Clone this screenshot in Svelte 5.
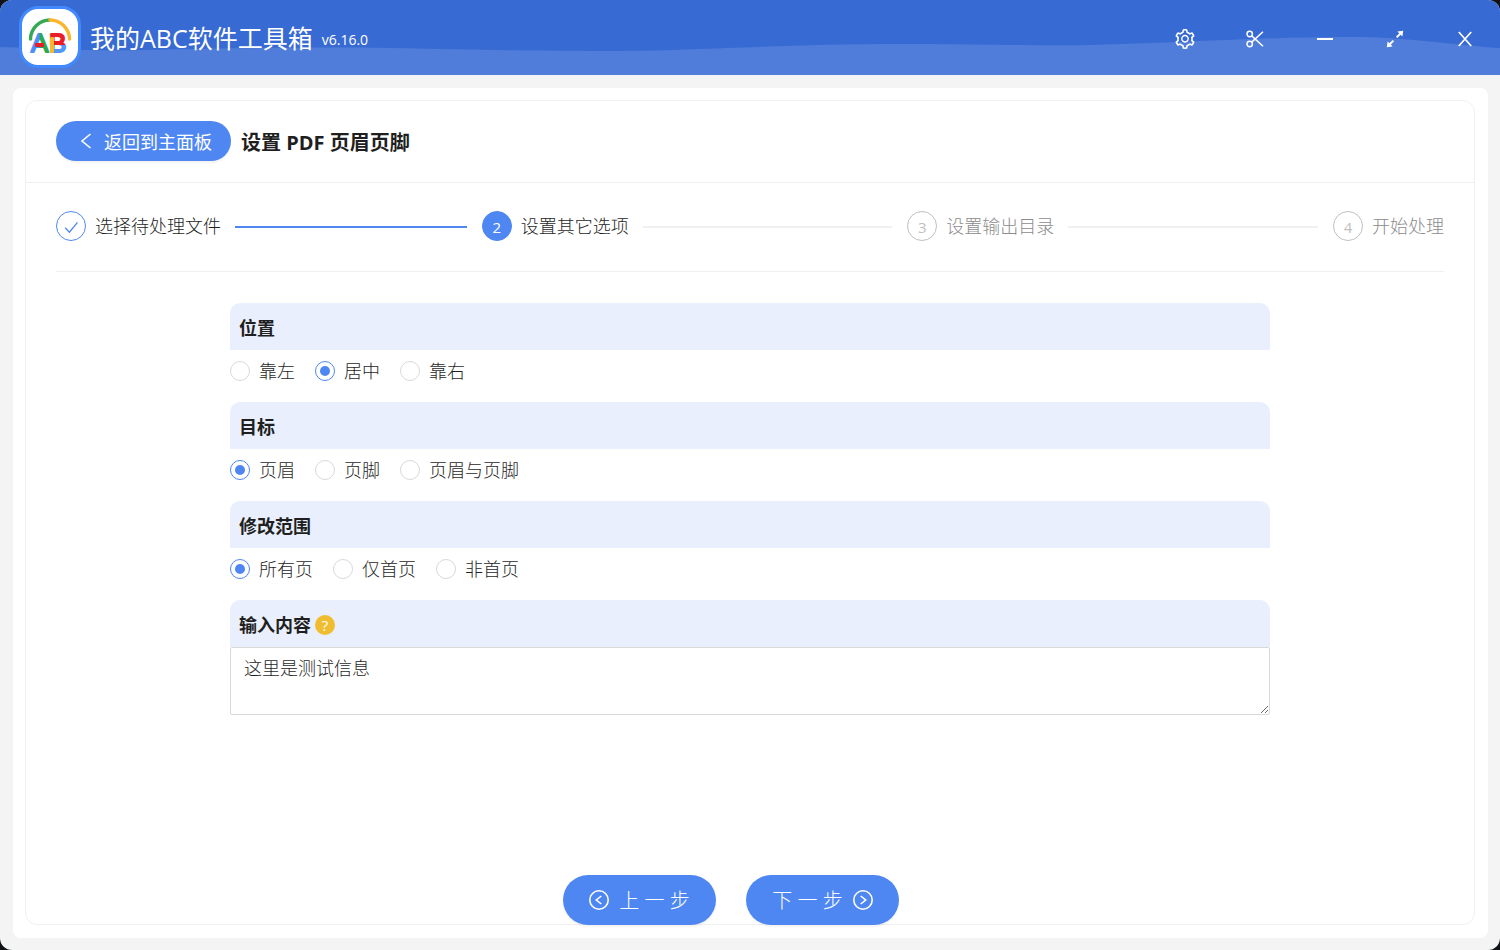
<script lang="ts">
  // PDF header/footer wizard, step 2: other options

  interface OptionGroup {
    name: string;
    title: string;
    options: string[];
    selected: string;
  }

  const steps = ['选择待处理文件', '设置其它选项', '设置输出目录', '开始处理'];
  const current = 1;

  let groups: OptionGroup[] = $state([
    { name: 'align', title: '位置', options: ['靠左', '居中', '靠右'], selected: '居中' },
    { name: 'target', title: '目标', options: ['页眉', '页脚', '页眉与页脚'], selected: '页眉' },
    { name: 'range', title: '修改范围', options: ['所有页', '仅首页', '非首页'], selected: '所有页' }
  ]);

  let content = $state('这里是测试信息');
</script>

<div class="window">
  <header class="titlebar">
    <!-- Wave behind the title bar -->
    <svg class="wave" viewBox="0 0 1500 75" preserveAspectRatio="none" aria-hidden="true">
      <path d="M0 47C50 49 90 51 150 50C240 48 310 47 390 48C480 50 550 51 620 51C710 50 790 44 900 44C980 44 1020 46 1090 45C1180 43 1260 37 1350 37C1410 37 1450 45 1500 48V75H0Z" />
    </svg>

    <div class="brand">
      <svg class="logo" viewBox="0 0 56 56" aria-hidden="true">
        <defs>
          <linearGradient id="logo-a">
            <stop offset="0.45" stop-color="#4c8ff8" />
            <stop offset="0.5" stop-color="#2fa84f" />
          </linearGradient>
          <linearGradient id="logo-b" x2="0" y2="1">
            <stop offset="0.56" stop-color="#ea1c24" />
            <stop offset="0.56" stop-color="#5596fb" />
          </linearGradient>
        </defs>
        <path d="M8.500 30A19.500 19.500 0 0 1 28 11" fill="none" stroke="#34a853" stroke-width="3.400" stroke-linecap="round" />
        <path d="M28 11A19.500 19.500 0 0 1 47.500 30" fill="none" stroke="#fbb62c" stroke-width="3.400" stroke-linecap="round" />
        <text x="9" y="43" fill="url(#logo-a)" stroke="url(#logo-a)">A</text>
        <text x="27" y="43" fill="url(#logo-b)" stroke="url(#logo-b)">B</text>
        <rect x="13" y="34" width="9" height="4" rx="1" fill="#ea1c24" />
        <rect x="28" y="28" width="4" height="16" rx="1" fill="#fbb62c" />
      </svg>
      <h1>我的ABC软件工具箱</h1>
      <span class="version">v6.16.0</span>
    </div>

    <div class="window-actions">
      <button type="button" aria-label="设置">
        <svg viewBox="64 64 896 896" fill="currentColor"><path d="M924.8 625.7l-65.500-56c3.100-19 4.700-38.400 4.700-57.800s-1.600-38.800-4.700-57.800l65.500-56a32.030 32.030 0 009.300-35.200l-.9-2.600a443.740 443.740 0 00-79.700-137.900l-1.800-2.100a32.120 32.120 0 00-35.100-9.500l-81.300 28.900c-30-24.600-63.500-44-99.700-57.600l-15.700-85a32.050 32.050 0 00-25.800-25.700l-2.700-.5c-52.100-9.400-106.900-9.400-159 0l-2.700.5a32.050 32.050 0 00-25.800 25.700l-15.800 85.400a351.860 351.860 0 00-99 57.400l-81.900-29.100a32 32 0 00-35.100 9.500l-1.800 2.100a446.020 446.020 0 00-79.700 137.900l-.9 2.600c-4.500 12.500-.8 26.500 9.300 35.200l66.300 56.600c-3.100 18.800-4.600 38-4.600 57.100 0 19.200 1.500 38.400 4.600 57.100L99 625.500a32.030 32.030 0 00-9.300 35.200l.9 2.600c18.100 50.400 44.900 96.900 79.700 137.900l1.800 2.100a32.120 32.120 0 0035.100 9.500l81.900-29.100c29.800 24.500 63.100 43.900 99 57.400l15.800 85.400a32.050 32.050 0 0025.800 25.700l2.700.5a449.400 449.400 0 00159 0l2.700-.5a32.050 32.050 0 0025.800-25.700l15.700-85a350 350 0 0099.700-57.600l81.300 28.900a32 32 0 0035.100-9.500l1.800-2.100c34.800-41.100 61.600-87.500 79.700-137.900l.9-2.600c4.500-12.300.8-26.300-9.300-35zM788.300 465.900c2.500 15.100 3.800 30.600 3.800 46.100s-1.300 31-3.800 46.100l-6.600 40.100 74.700 63.900a370.030 370.030 0 01-42.600 73.600L721 702.800l-31.400 25.800c-23.900 19.600-50.500 35-79.300 45.800l-38.100 14.300-17.900 97a377.500 377.500 0 01-85 0l-17.900-97.200-37.800-14.500c-28.500-10.800-55-26.200-78.700-45.700l-31.400-25.900-93.400 33.200c-17-22.900-31.200-47.600-42.600-73.600l75.500-64.500-6.500-40c-2.400-14.900-3.700-30.300-3.700-45.500 0-15.300 1.200-30.600 3.700-45.500l6.500-40-75.500-64.500c11.300-26.100 25.600-50.700 42.600-73.600l93.400 33.200 31.400-25.900c23.700-19.500 50.200-34.900 78.700-45.700l37.900-14.300 17.900-97.200c28.100-3.200 56.800-3.200 85 0l17.900 97 38.100 14.300c28.700 10.800 55.400 26.200 79.300 45.800l31.400 25.800 92.800-32.900c17 22.900 31.200 47.600 42.600 73.600L781.800 426l6.500 39.900zM512 326c-97.200 0-176 78.800-176 176s78.800 176 176 176 176-78.800 176-176-78.800-176-176-176zm79.200 255.200A111.600 111.600 0 01512 614c-29.900 0-58-11.700-79.200-32.800A111.600 111.600 0 01400 502c0-29.900 11.700-58 32.800-79.200C454 401.600 482.100 390 512 390c29.900 0 58 11.600 79.200 32.800A111.600 111.600 0 01624 502c0 29.900-11.700 58-32.800 79.200z" /></svg>
      </button>
      <button type="button" aria-label="截图">
        <svg viewBox="0 0 20 20" fill="none" stroke="currentColor" stroke-width="1.500">
          <circle cx="4.700" cy="5" r="2.700" />
          <circle cx="4.700" cy="15" r="2.700" />
          <path d="M6.700 6.900L18 17.200M6.700 13.100L18 2.800" />
        </svg>
      </button>
      <button type="button" aria-label="最小化">
        <svg viewBox="0 0 20 20" fill="currentColor"><rect x="2" y="9" width="16" height="2" /></svg>
      </button>
      <button type="button" aria-label="最大化">
        <svg viewBox="0 0 20 20" fill="currentColor" stroke="currentColor">
          <path d="M11.600 8.400L16 4M8.400 11.600L4 16" stroke-width="2" />
          <path d="M12.400 2.600L18.200 1.800L17.400 7.600ZM7.600 17.400L1.800 18.200L2.600 12.400Z" stroke="none" />
        </svg>
      </button>
      <button type="button" aria-label="关闭">
        <svg viewBox="0 0 20 20" fill="none" stroke="currentColor" stroke-width="1.700"><path d="M3.800 3L16.200 17M16.200 3L3.800 17" /></svg>
      </button>
    </div>
  </header>

  <main>
    <div class="card">
      <div class="card-head">
        <button type="button" class="button back">
          <svg viewBox="0 0 20 20" fill="none" stroke="currentColor" stroke-width="1.600"><path d="M14.500 3L6 10L14.500 17" /></svg>
          <span>返回到主面板</span>
        </button>
        <h2>设置 PDF 页眉页脚</h2>
      </div>

      <div class="card-body">
        <ol class="steps">
          {#each steps as step, i}
            <li class:done={i < current} class:active={i === current}>
              <span class="step-icon">
                {#if i < current}
                  <svg viewBox="0 0 18 18" fill="none" stroke="currentColor" stroke-width="1.300"><path d="M3.200 9.800L7.400 14.200L15.500 4.300" /></svg>
                {:else}
                  {i + 1}
                {/if}
              </span>
              <span>{step}</span>
            </li>
          {/each}
        </ol>

        <form class="options">
          {#each groups as group}
            <fieldset>
              <legend class="section-title">{group.title}</legend>
              <div class="radios">
                {#each group.options as option}
                  <label>
                    <input type="radio" name={group.name} value={option} bind:group={group.selected} />
                    {option}
                  </label>
                {/each}
              </div>
            </fieldset>
          {/each}

          <div class="section-title">
            <label for="content">输入内容</label>
            <button type="button" class="help" aria-label="帮助">?</button>
          </div>
          <textarea id="content" bind:value={content}></textarea>
        </form>

        <div class="footer">
          <button type="button" class="button nav">
            <svg viewBox="0 0 20 20" fill="none" stroke="currentColor" stroke-width="1.600"><circle cx="10" cy="10" r="9.200" /><path d="M12.300 6L7.300 10L12.300 14" /></svg>
            <span>上 一 步</span>
          </button>
          <button type="button" class="button nav">
            <span>下 一 步</span>
            <svg viewBox="0 0 20 20" fill="none" stroke="currentColor" stroke-width="1.600"><circle cx="10" cy="10" r="9.200" /><path d="M7.700 6L12.700 10L7.700 14" /></svg>
          </button>
        </div>
      </div>
    </div>
  </main>
</div>

<style>
  :global(body) {
    background: #101216;
  }

  .window,
  .window * {
    box-sizing: border-box;
  }

  .window {
    --primary: #4f87f2;
    --line: #f0f0f0;

    display: flex;
    flex-direction: column;
    min-height: 100vh;
    overflow: hidden;
    border-radius: 12px;
    background: #f4f4f4;
    color: #1f1f1f;
    font-family: "Open Sans", "Noto Sans CJK SC", sans-serif;
    font-size: 18px;
    font-weight: 300;
    line-height: 28px;
  }

  button,
  textarea {
    font: inherit;
    color: inherit;
  }

  button {
    padding: 0;
    border: none;
    background: none;
    cursor: pointer;
  }

  svg {
    display: block;
    width: 20px;
    height: 20px;
    flex: none;
  }

  /* Title bar */
  .titlebar {
    position: relative;
    display: flex;
    align-items: center;
    justify-content: space-between;
    height: 75px;
    padding: 0 25px 1px 19px;
    background: #386ad3;
    color: #fff;
  }

  .wave {
    position: absolute;
    inset: 0;
    width: 100%;
    height: 100%;
    fill: #507dd9;
  }

  .brand {
    position: relative;
    display: flex;
    align-items: center;
  }

  .logo {
    width: 62px;
    height: 62px;
    margin-right: 9px;
    border: 3px solid #4289ff;
    border-radius: 19px;
    background: #fff;
    font: 26px "Liberation Sans", sans-serif;
    stroke-width: 2;
    stroke-linejoin: round;
  }

  h1 {
    margin: 0 9px 0 0;
    padding-top: 2px;
    font-size: 25px;
    font-weight: 400;
  }

  .version {
    padding-top: 6px;
    font-size: 14px;
    font-weight: 400;
  }

  .window-actions {
    position: relative;
    display: flex;
    gap: 50px;
    padding-top: 4px;
  }

  /* Card */
  main {
    display: flex;
    flex: 1;
    margin: 13px 12px 12px 13px;
    padding: 12px 13px 13px 12px;
    border-radius: 8px;
    background: #fff;
  }

  .card {
    display: flex;
    flex: 1;
    flex-direction: column;
    border: 1px solid var(--line);
    border-radius: 12px;
  }

  .card-head {
    display: flex;
    align-items: center;
    gap: 10px;
    padding: 20px 30px 21px;
    border-bottom: 1px solid var(--line);
  }

  h2 {
    margin: 0;
    padding-top: 4px;
    font-size: 20px;
    font-weight: 700;
  }

  .button {
    display: flex;
    align-items: center;
    justify-content: center;
    background: var(--primary);
    color: #fff;
    font-weight: 400;
    box-shadow: 0 2px 2px rgba(0, 0, 0, 0.05);
  }

  .button span {
    padding-top: 2px;
  }

  .back {
    gap: 8px;
    height: 40px;
    padding: 0 19px 0 20px;
    border-radius: 20px;
  }

  .card-body {
    display: flex;
    flex: 1;
    flex-direction: column;
    padding: 0 30px;
  }

  /* Steps */
  .steps {
    display: flex;
    margin: 0;
    padding: 28px 0 30px;
    border-bottom: 1px solid var(--line);
    list-style: none;
    color: #8c8c8c;
  }

  .steps li {
    display: flex;
    align-items: center;
    gap: 9px;
  }

  .steps li:not(:last-child) {
    flex: 1;
  }

  .steps li:not(:last-child)::after {
    content: '';
    flex: 1;
    height: 2px;
    margin: 2px 15px 0 5px;
    background: var(--line);
  }

  .steps .done,
  .steps .active {
    color: #1f1f1f;
  }

  .steps .done:not(:last-child)::after {
    background: var(--primary);
  }

  .step-icon {
    display: flex;
    align-items: center;
    justify-content: center;
    width: 30px;
    height: 30px;
    padding-top: 1px;
    border: 1px solid #bfbfbf;
    border-radius: 50%;
    color: #bfbfbf;
    font-size: 15px;
    font-weight: 400;
  }

  .step-icon svg {
    width: 18px;
    height: 18px;
  }

  .done .step-icon {
    border-color: var(--primary);
    color: var(--primary);
  }

  .active .step-icon {
    border-color: var(--primary);
    background: var(--primary);
    color: #fff;
  }

  /* Form */
  .options {
    width: 100%;
    max-width: 1040px;
    margin: 31px auto 0;
  }

  fieldset {
    min-width: 0;
    margin: 0;
    padding: 0;
    border: none;
  }

  .section-title {
    display: flex;
    align-items: center;
    gap: 4px;
    width: 100%;
    height: 47px;
    padding: 2px 9px 0;
    border-radius: 10px 10px 0 0;
    background: #e9effc;
    font-weight: 700;
  }

  .radios {
    display: flex;
    gap: 20px;
    padding: 7px 0 17px;
  }

  .radios label {
    display: flex;
    align-items: center;
    gap: 9px;
  }

  input[type='radio'] {
    appearance: none;
    display: grid;
    place-items: center;
    width: 20px;
    height: 20px;
    margin: 0;
    border: 1px solid #d9d9d9;
    border-radius: 50%;
    background: #fff;
  }

  input[type='radio']:checked {
    border-color: var(--primary);
  }

  input[type='radio']:checked::before {
    content: '';
    width: 10px;
    height: 10px;
    border-radius: 50%;
    background: var(--primary);
  }

  .help {
    width: 20px;
    height: 20px;
    border-radius: 50%;
    background: #efbd2f;
    color: #fff;
    font-size: 15px;
    font-weight: 400;
    line-height: 20px;
  }

  textarea {
    display: block;
    width: 100%;
    height: 68px;
    padding: 6px 13px;
    border: 1px solid #d9d9d9;
    border-radius: 2px;
    background: #fff;
    outline: none;
    resize: vertical;
  }

  /* Footer overlaps the card border */
  .footer {
    display: flex;
    justify-content: center;
    gap: 30px;
    margin: auto 0 -1px;
    padding: 30px 38px 0 0;
  }

  .nav {
    gap: 10px;
    min-width: 153px;
    height: 50px;
    border-radius: 25px;
    font-size: 20px;
    font-weight: 300;
  }
</style>
